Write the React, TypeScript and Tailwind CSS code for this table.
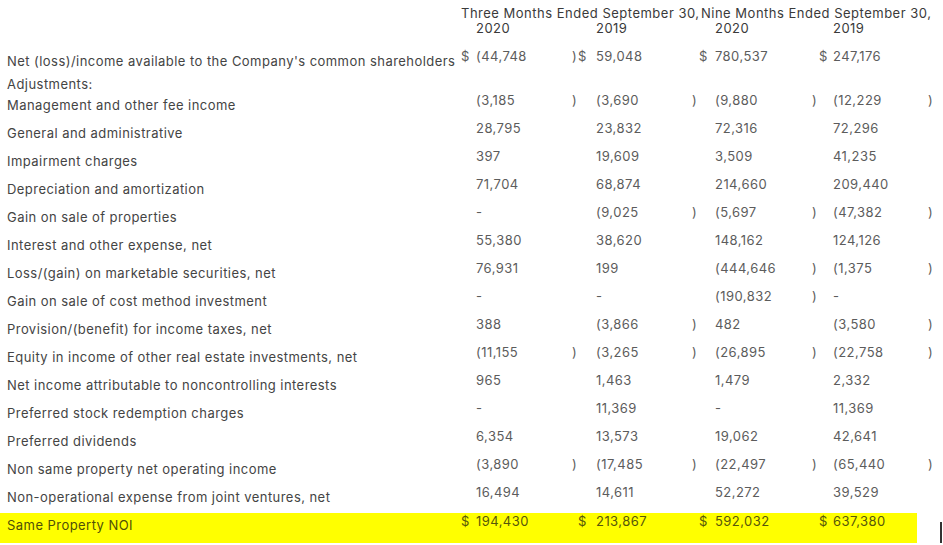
const cols =
  'grid grid-cols-[459px_17px_94px_6px_20px_94px_9px_16px_95px_9px_14px_93px_14px_3px]';

// per-period horizontal nudges for the "$" and ")" cells
const dollarPad = ['pl-[2px]', 'pl-[2px]', 'pl-0', 'pl-0'];
const parenPad = ['pl-[2px]', 'pl-[2px]', 'pl-[2px]', 'pl-[2px]'];

type RowData = { label: string; vals: string[]; dollar?: boolean };

const rows: RowData[] = [
  { label: 'Management and other fee income', vals: ['(3,185', '(3,690', '(9,880', '(12,229'] },
  { label: 'General and administrative', vals: ['28,795', '23,832', '72,316', '72,296'] },
  { label: 'Impairment charges', vals: ['397', '19,609', '3,509', '41,235'] },
  { label: 'Depreciation and amortization', vals: ['71,704', '68,874', '214,660', '209,440'] },
  { label: 'Gain on sale of properties', vals: ['-', '(9,025', '(5,697', '(47,382'] },
  { label: 'Interest and other expense, net', vals: ['55,380', '38,620', '148,162', '124,126'] },
  { label: 'Loss/(gain) on marketable securities, net', vals: ['76,931', '199', '(444,646', '(1,375'] },
  { label: 'Gain on sale of cost method investment', vals: ['-', '-', '(190,832', '-'] },
  { label: 'Provision/(benefit) for income taxes, net', vals: ['388', '(3,866', '482', '(3,580'] },
  { label: 'Equity in income of other real estate investments, net', vals: ['(11,155', '(3,265', '(26,895', '(22,758'] },
  { label: 'Net income attributable to noncontrolling interests', vals: ['965', '1,463', '1,479', '2,332'] },
  { label: 'Preferred stock redemption charges', vals: ['-', '11,369', '-', '11,369'] },
  { label: 'Preferred dividends', vals: ['6,354', '13,573', '19,062', '42,641'] },
  { label: 'Non same property net operating income', vals: ['(3,890', '(17,485', '(22,497', '(65,440'] },
  { label: 'Non-operational expense from joint ventures, net', vals: ['16,494', '14,611', '52,272', '39,529'] },
];

function ValueCells({ vals, dollar, tone }: { vals: string[]; dollar?: boolean; tone: string }) {
  return (
    <>
      {vals.map((v, i) => (
        <div key={i} className="contents">
          <div className={`${dollarPad[i]} ${tone}`}>{dollar ? '$' : ''}</div>
          <div className={`whitespace-nowrap ${tone}`}>{v}</div>
          <div className={`${parenPad[i]} ${tone}`}>{v.startsWith('(') ? ')' : ''}</div>
        </div>
      ))}
    </>
  );
}

function Row({ label, vals, dollar }: RowData) {
  return (
    <div className={`${cols} h-[28px] leading-[16px]`}>
      <div className="whitespace-nowrap pl-[7px] pt-[5px] text-[#444]">{label}</div>
      <ValueCells vals={vals} dollar={dollar} tone="text-[#5c5c5c]" />
    </div>
  );
}

export default function App() {
  return (
    <div className="h-[545px] w-[943px] overflow-hidden bg-white font-['Inter',sans-serif] text-[13px] tracking-[0.45px]">
      {/* Column headers */}
      <div className="h-[48px] pt-[6px] leading-[15px] text-[#3a3a3a]">
        <div className="grid grid-cols-[461px_240px_1fr] tracking-[0.5px]">
          <div />
          <div className="whitespace-nowrap">Three Months Ended September 30,</div>
          <div className="whitespace-nowrap">Nine Months Ended September 30,</div>
        </div>
        <div className="grid grid-cols-[476px_120px_119px_118px_1fr]">
          <div />
          <div>2020</div>
          <div>2019</div>
          <div>2020</div>
          <div>2019</div>
        </div>
      </div>

      <Row label="Net (loss)/income available to the Company's common shareholders" vals={['(44,748', '59,048', '780,537', '247,176']} dollar />

      <div className="h-[16px] pl-[7px] leading-[16px] text-[#444]">Adjustments:</div>

      {rows.map((r) => (
        <Row key={r.label} {...r} />
      ))}

      {/* Highlighted total */}
      <div className={`${cols} mt-[1px] h-[30px] bg-[linear-gradient(to_right,#ffff00_917px,transparent_917px)] leading-[16px]`}>
        <div className="whitespace-nowrap pl-[7px] pt-[4px] text-[#4f4f08]">Same Property NOI</div>
        <ValueCells vals={['194,430', '213,867', '592,032', '637,380']} dollar tone="text-[#57570a]" />
        <div className="self-end h-[21px] w-[1.5px] bg-[#333]" />
      </div>
    </div>
  );
}
